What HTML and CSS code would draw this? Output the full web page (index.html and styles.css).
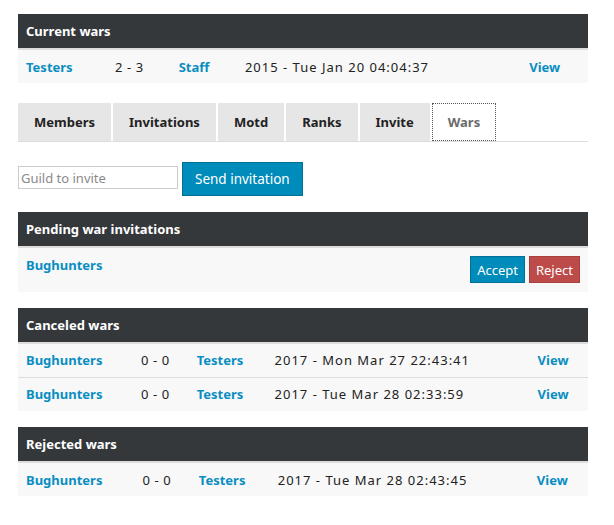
FILE: index.html
```html
<!DOCTYPE html>
<html lang="en">
<head>
<meta charset="utf-8">
<title>Guild wars</title>
<link rel="stylesheet" href="styles.css">
</head>
<body>
<div class="page">
  <section class="panel">
    <h2 class="panel-title">Current wars</h2>
    <table class="war-table">
      <tr>
        <td><a href="#">Testers</a></td>
        <td class="score">2 - 3</td>
        <td><a href="#">Staff</a></td>
        <td class="date">2015 - Tue Jan 20 04:04:37</td>
        <td><a href="#">View</a></td>
      </tr>
    </table>
  </section>

  <nav class="tabs">
    <a class="tab" href="#">Members</a>
    <a class="tab" href="#">Invitations</a>
    <a class="tab" href="#">Motd</a>
    <a class="tab" href="#">Ranks</a>
    <a class="tab" href="#">Invite</a>
    <a class="tab tab-active" href="#">Wars</a>
  </nav>

  <form class="invite-form">
    <input class="invite-input" type="text" placeholder="Guild to invite">
    <button class="btn btn-primary btn-large" type="button">Send invitation</button>
  </form>

  <section class="panel">
    <h2 class="panel-title">Pending war invitations</h2>
    <div class="pending-row">
      <a href="#">Bughunters</a>
      <div class="pending-actions">
        <button class="btn btn-primary" type="button">Accept</button>
        <button class="btn btn-danger" type="button">Reject</button>
      </div>
    </div>
  </section>

  <section class="panel">
    <h2 class="panel-title">Canceled wars</h2>
    <table class="war-table">
      <tr>
        <td><a href="#">Bughunters</a></td>
        <td class="score">0 - 0</td>
        <td><a href="#">Testers</a></td>
        <td class="date">2017 - Mon Mar 27 22:43:41</td>
        <td><a href="#">View</a></td>
      </tr>
      <tr>
        <td><a href="#">Bughunters</a></td>
        <td class="score">0 - 0</td>
        <td><a href="#">Testers</a></td>
        <td class="date">2017 - Tue Mar 28 02:33:59</td>
        <td><a href="#">View</a></td>
      </tr>
    </table>
  </section>

  <section class="panel">
    <h2 class="panel-title">Rejected wars</h2>
    <table class="war-table">
      <tr>
        <td><a href="#">Bughunters</a></td>
        <td class="score">0 - 0</td>
        <td><a href="#">Testers</a></td>
        <td class="date">2017 - Tue Mar 28 02:43:45</td>
        <td><a href="#">View</a></td>
      </tr>
    </table>
  </section>
</div>
</body>
</html>
```

FILE: styles.css
```css
* {
  box-sizing: border-box;
}

body {
  margin: 0;
  background: #fff;
  color: #222;
  font-family: "Noto Sans", "Open Sans", sans-serif;
  font-size: 13px;
}

a {
  color: #0a8ec2;
  font-weight: bold;
  text-decoration: none;
}

.page {
  width: 570px;
  margin: 14px 0 0 18px;
  display: flex;
  flex-direction: column;
}

/* dark section header with a light rule underneath */
.panel-title {
  margin: 0;
  height: 36px;
  padding: 0 8px;
  line-height: 34px;
  font-size: 13px;
  font-weight: bold;
  color: #fff;
  background: #35383b;
  border-bottom: 2px solid #dcdcdc;
}

.war-table {
  width: 100%;
  border-collapse: collapse;
  background: #f8f8f8;
}

.war-table td {
  height: 33px;
  padding: 0 8px;
  white-space: nowrap;
  vertical-align: middle;
}

.war-table tr + tr td {
  border-top: 1px solid #dcdcdc;
  height: 34px;
}

.war-table .score {
  letter-spacing: 0.6px;
}

.war-table .date {
  letter-spacing: 1px;
}

/* tab strip */
.tabs {
  display: flex;
  gap: 2px;
  margin-top: 20px;
  border-bottom: 1px solid #dcdcdc;
}

.tab {
  height: 38px;
  padding: 0 16px;
  line-height: 38px;
  background: #e6e6e6;
  color: #222;
  font-weight: bold;
}

.tab-active {
  background: #fff;
  color: #6b6b6b;
  outline: 1px dotted #555;
  outline-offset: -1px;
}

.invite-form {
  display: flex;
  align-items: flex-start;
  gap: 4px;
  margin: 20px 0 16px;
}

.invite-input {
  width: 160px;
  height: 23px;
  margin-top: 4px;
  padding: 0 2px;
  border: 1px solid #ccc;
  font-family: inherit;
  font-size: 13px;
  color: #222;
}

.invite-input::placeholder {
  color: #8a8a8a;
}

.btn {
  border: 1px solid;
  color: #fff;
  font-family: inherit;
  font-size: 13px;
  height: 27px;
  padding: 0 6px;
  cursor: pointer;
}

.btn-large {
  height: 34px;
  padding: 0 12px;
  font-size: 13.5px;
}

.btn-primary {
  background: #008cba;
  border-color: #007095;
}

.btn-danger {
  background: #bd4b49;
  border-color: #a8403e;
}

.pending-row {
  display: flex;
  justify-content: space-between;
  align-items: flex-start;
  height: 44px;
  padding: 8px 8px 0;
  background: #f8f8f8;
}

.pending-row > a {
  line-height: 16px;
  margin-top: 1px;
}

.pending-actions {
  display: flex;
  gap: 4px;
}

.panel + .panel {
  margin-top: 16px;
}
```
